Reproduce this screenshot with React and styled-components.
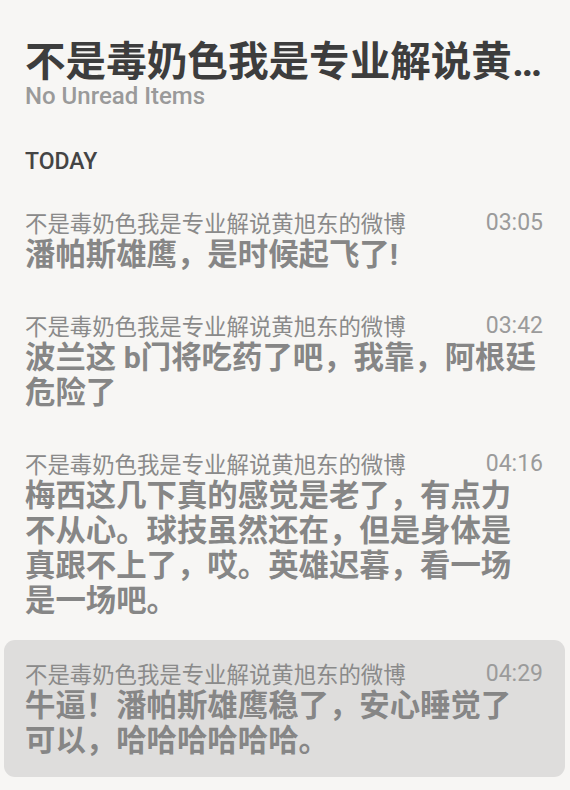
import styled, { createGlobalStyle } from 'styled-components';

const GlobalStyle = createGlobalStyle`
  html, body {
    margin: 0;
    padding: 0;
    background: #f7f6f4;
    overflow: hidden;
  }
  body {
    font-family: Roboto, "Noto Sans CJK SC", sans-serif;
  }
`;

const items = [
  { source: '不是毒奶色我是专业解说黄旭东的微博', time: '03:05', text: '潘帕斯雄鹰，是时候起飞了!' },
  { source: '不是毒奶色我是专业解说黄旭东的微博', time: '03:42', text: '波兰这 b门将吃药了吧，我靠，阿根廷危险了' },
  {
    source: '不是毒奶色我是专业解说黄旭东的微博',
    time: '04:16',
    text: '梅西这几下真的感觉是老了，有点力不从心。球技虽然还在，但是身体是真跟不上了，哎。英雄迟暮，看一场是一场吧。',
  },
  {
    source: '不是毒奶色我是专业解说黄旭东的微博',
    time: '04:29',
    text: '牛逼！潘帕斯雄鹰稳了，安心睡觉了可以，哈哈哈哈哈哈。',
    active: true,
  },
];

const App = () => (
  <>
    <GlobalStyle />
    <Page>
      <Header>
        <Title>不是毒奶色我是专业解说黄旭东的微博</Title>
        <Subtitle>No Unread Items</Subtitle>
      </Header>
      <SectionLabel>TODAY</SectionLabel>
      <List>
        {items.map((item) => (
          <Item key={item.time} $active={item.active}>
            <Meta>
              <Source>{item.source}</Source>
              <Time>{item.time}</Time>
            </Meta>
            <Message>{item.text}</Message>
          </Item>
        ))}
      </List>
    </Page>
  </>
);

const Page = styled.div`
  width: 570px;
  min-height: 790px;
  box-sizing: border-box;
  padding-top: 40px;
  display: flex;
  flex-direction: column;
`;

const Header = styled.div`
  padding: 0 25px;
  display: flex;
  flex-direction: column;
`;

const Title = styled.h1`
  margin: 0;
  font-size: 40.6px;
  line-height: 44px;
  font-weight: 700;
  color: #3d3d3d;
  white-space: nowrap;
  overflow: hidden;
  text-overflow: ellipsis;
`;

const Subtitle = styled.div`
  font-size: 24px;
  line-height: 24px;
  font-weight: 500;
  color: #9a9a9a;
`;

const SectionLabel = styled.div`
  margin-top: 41px;
  padding: 0 25px;
  font-size: 23px;
  line-height: 26px;
  font-weight: 500;
  color: #444;
`;

const List = styled.div`
  margin-top: 14px;
  padding: 0 5px 0 4px;
  display: flex;
  flex-direction: column;
  gap: 1px;
`;

const Item = styled.div`
  padding: 18px 22px 19px 21px;
  border-radius: 11px;
  background: ${({ $active }) => ($active ? '#dedddc' : 'transparent')};
  margin-top: ${({ $active }) => ($active ? '2px' : '0')};
`;

const Meta = styled.div`
  display: flex;
  justify-content: space-between;
  align-items: center;
  height: 30px;
`;

const Source = styled.span`
  font-size: 22.4px;
  color: #8a8a8a;
`;

const Time = styled.span`
  font-size: 23px;
  color: #9b9b9b;
`;

const Message = styled.div`
  max-width: 514px;
  font-size: 30.4px;
  line-height: 35px;
  font-weight: 700;
  color: #868686;
`;

export default App;
